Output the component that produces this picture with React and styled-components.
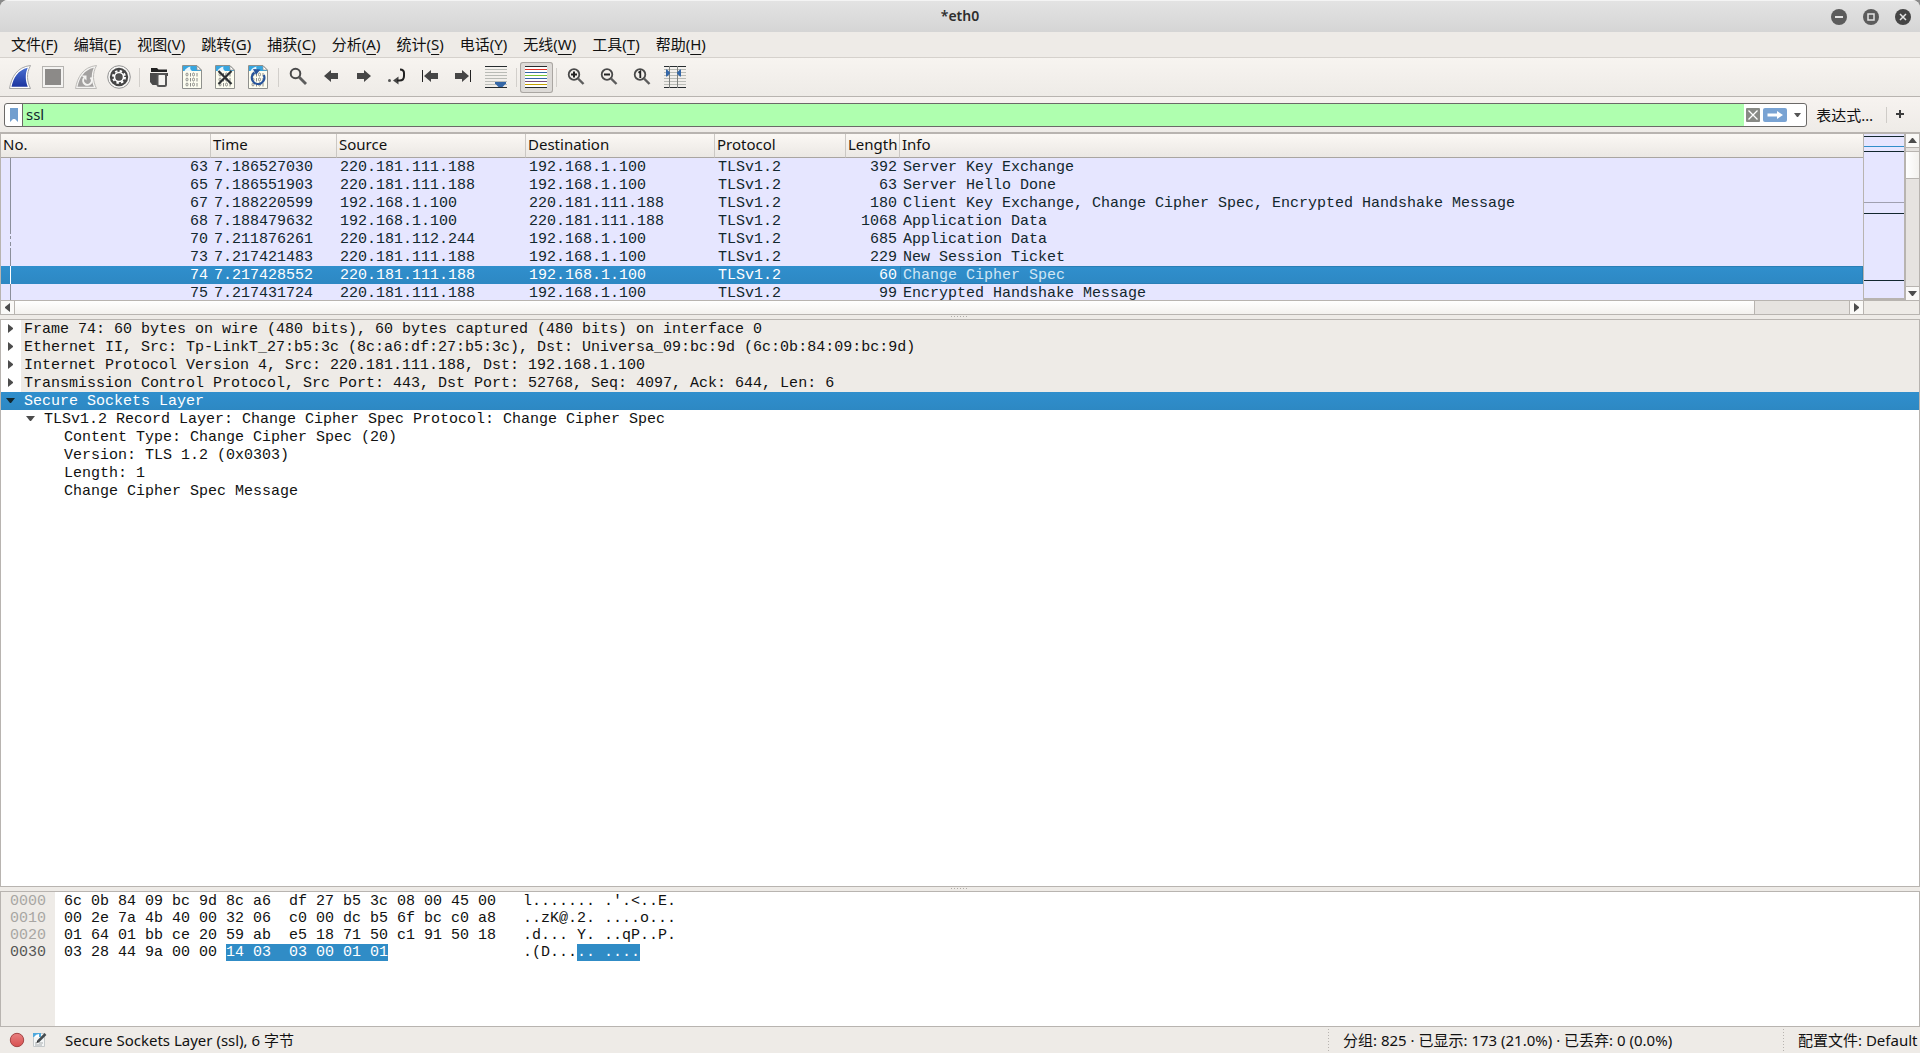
import React, { useState } from "react";
import styled, { createGlobalStyle, css } from "styled-components";

const UI_FONT = `"Noto Sans", "Noto Sans CJK SC", sans-serif`;
const MONO_FONT = `"Liberation Mono", "Noto Sans CJK SC", monospace`;

const MENUS = [
  ["文件", "F"],
  ["编辑", "E"],
  ["视图", "V"],
  ["跳转", "G"],
  ["捕获", "C"],
  ["分析", "A"],
  ["统计", "S"],
  ["电话", "Y"],
  ["无线", "W"],
  ["工具", "T"],
  ["帮助", "H"],
];

const COLUMNS = [
  { name: "No.", width: 210 },
  { name: "Time", width: 126 },
  { name: "Source", width: 189 },
  { name: "Destination", width: 189 },
  { name: "Protocol", width: 131 },
  { name: "Length", width: 54 },
  { name: "Info" },
];

const PACKETS = [
  [63, "7.186527030", "220.181.111.188", "192.168.1.100", "TLSv1.2", 392, "Server Key Exchange"],
  [65, "7.186551903", "220.181.111.188", "192.168.1.100", "TLSv1.2", 63, "Server Hello Done"],
  [67, "7.188220599", "192.168.1.100", "220.181.111.188", "TLSv1.2", 180, "Client Key Exchange, Change Cipher Spec, Encrypted Handshake Message"],
  [68, "7.188479632", "192.168.1.100", "220.181.111.188", "TLSv1.2", 1068, "Application Data"],
  [70, "7.211876261", "220.181.112.244", "192.168.1.100", "TLSv1.2", 685, "Application Data"],
  [73, "7.217421483", "220.181.111.188", "192.168.1.100", "TLSv1.2", 229, "New Session Ticket"],
  [74, "7.217428552", "220.181.111.188", "192.168.1.100", "TLSv1.2", 60, "Change Cipher Spec"],
  [75, "7.217431724", "220.181.111.188", "192.168.1.100", "TLSv1.2", 99, "Encrypted Handshake Message"],
];

const DETAILS = [
  { level: 0, arrow: "right", shaded: true, text: "Frame 74: 60 bytes on wire (480 bits), 60 bytes captured (480 bits) on interface 0" },
  { level: 0, arrow: "right", shaded: true, text: "Ethernet II, Src: Tp-LinkT_27:b5:3c (8c:a6:df:27:b5:3c), Dst: Universa_09:bc:9d (6c:0b:84:09:bc:9d)" },
  { level: 0, arrow: "right", shaded: true, text: "Internet Protocol Version 4, Src: 220.181.111.188, Dst: 192.168.1.100" },
  { level: 0, arrow: "right", shaded: true, text: "Transmission Control Protocol, Src Port: 443, Dst Port: 52768, Seq: 4097, Ack: 644, Len: 6" },
  { level: 0, arrow: "down", selected: true, text: "Secure Sockets Layer" },
  { level: 1, arrow: "down", text: "TLSv1.2 Record Layer: Change Cipher Spec Protocol: Change Cipher Spec" },
  { level: 2, text: "Content Type: Change Cipher Spec (20)" },
  { level: 2, text: "Version: TLS 1.2 (0x0303)" },
  { level: 2, text: "Length: 1" },
  { level: 2, text: "Change Cipher Spec Message" },
];

const HEX = [
  { offset: "0000", bytes: "6c 0b 84 09 bc 9d 8c a6  df 27 b5 3c 08 00 45 00", ascii: "l....... .'.<..E." },
  { offset: "0010", bytes: "00 2e 7a 4b 40 00 32 06  c0 00 dc b5 6f bc c0 a8", ascii: "..zK@.2. ....o..." },
  { offset: "0020", bytes: "01 64 01 bb ce 20 59 ab  e5 18 71 50 c1 91 50 18", ascii: ".d... Y. ..qP..P." },
  {
    offset: "0030",
    bytes: "03 28 44 9a 00 00 ",
    markedBytes: "14 03  03 00 01 01",
    ascii: ".(D...",
    markedAscii: ".. ....",
    active: true,
  },
];

const MARKS = [
  [2, "#12272e"],
  [12, "#308fcb"],
  [17, "#12272e"],
  [68, "#a0a0b0"],
  [79, "#12272e"],
  [146, "#12272e"],
];

const GRAY_LINES = [4, 7, 10, 13, 16, 19];

const Icon = ({ size = 25, children }) => (
  <svg width={size} height={size} viewBox={`0 0 ${size} ${size}`} fill="none" aria-hidden="true">
    {children}
  </svg>
);

const FIN = "M1.5 23.5C3.5 12 9 2 22.5 .5C18 9 19 16 22.5 23.5Z";
const FIN_INNER = "M3.5 21.8C5.5 12.5 10 5 19.8 2.7C16.8 9 17.5 16 19.8 21.8Z";

const FinIcon = () => (
  <Icon>
    <defs>
      <linearGradient id="fin" x1="0" y1="0" x2="0" y2="1">
        <stop offset="0" stopColor="#4a6fd0" />
        <stop offset="1" stopColor="#1c35a0" />
      </linearGradient>
    </defs>
    <path d={FIN} fill="#fff" stroke="#a5a5a5" />
    <path d={FIN_INNER} fill="url(#fin)" />
  </Icon>
);

const StopIcon = () => (
  <Icon>
    <rect x="1.5" y="1.5" width="21" height="21" fill="#f4f3f1" stroke="#b5b3b0" />
    <rect x="4" y="4" width="16" height="16" fill="#8c8a88" />
  </Icon>
);

const RestartIcon = () => (
  <Icon>
    <path d={FIN} fill="#f4f3f1" stroke="#bdbbb8" />
    <path d={FIN_INNER} fill="#a3a1a0" />
    <path d="M16.5 12.5a4.3 4.3 0 1 1-6.5.5" stroke="#f4f3f1" strokeWidth="2" />
    <path d="M7.5 10.5h5v5z" fill="#f4f3f1" />
  </Icon>
);

const OptionsIcon = () => (
  <Icon>
    <circle cx="12" cy="12" r="11.3" fill="#f8f7f5" stroke="#929292" />
    <circle cx="12" cy="12" r="9.2" fill="#454545" />
    <circle cx="12" cy="12" r="6" stroke="#fff" strokeWidth="2" strokeDasharray="2.4 2.31" />
    <circle cx="12" cy="12" r="4.5" stroke="#fff" strokeWidth="1.6" />
    <circle cx="12" cy="12" r="3" fill="#505050" />
  </Icon>
);

const OpenIcon = () => (
  <Icon>
    <path d="M4 3h6l1.5 1.5H20V7H4z" fill="#222" />
    <path d="M3 8h18v3h-9v9H5.5L3 17z" fill="#4a4a4a" />
    <rect x="10.5" y="9" width="8.5" height="12" rx="1.5" fill="#f5f3f0" stroke="#555" strokeWidth="2" />
  </Icon>
);

const DocIcon = ({ children }) => (
  <Icon>
    <path d="M2.5.5H17l4.500 4.500v18.500h-19z" fill="#fdfdf0" stroke="#8f908d" />
    <path d="M3 1h13.500L21 5.500v.5H3z" fill="#37a6e0" />
    <path d="M4.500 6q1-3 6-4.500-1 2.500 1.500 4.500z" fill="#e8f5fc" />
    <path d="M17 1v4h4z" fill="#fff" stroke="#8f908d" strokeWidth=".7" />
    <g stroke="#8b8c88">
      {[8, 13, 18].map((y) => (
        <React.Fragment key={y}>
          <ellipse cx="7" cy={y + 1.5} rx="1" ry="1.5" />
          <path d={`M10.5 ${y}v3.500`} />
          <ellipse cx="13.5" cy={y + 1.5} rx="1" ry="1.5" />
          <path d={`M17 ${y}v3.500`} />
        </React.Fragment>
      ))}
    </g>
    {children}
  </Icon>
);

const CloseDocIcon = () => (
  <DocIcon>
    <path d="M5.5 6l13 13M18.5 6l-13 13" stroke="#2c3033" strokeWidth="2.2" />
  </DocIcon>
);

const ReloadIcon = () => (
  <DocIcon>
    <path d="M8.5 7.500A6.3 6.3 0 1 0 17.8 10" stroke="#27549b" strokeWidth="2.2" />
    <path d="M7 4l7.500.5-4.500 5.500z" fill="#27549b" />
  </DocIcon>
);

const Lens = ({ children }) => (
  <Icon>
    <circle cx="10" cy="9.5" r="5.3" stroke="#4a4a4a" strokeWidth="1.8" />
    <path d="M14 13.5l5.5 5.5" stroke="#5d5d5d" strokeWidth="2.4" />
    {children}
  </Icon>
);

const FindIcon = () => (
  <Icon>
    <circle cx="9.5" cy="8.5" r="4.8" stroke="#4a4a4a" strokeWidth="2" />
    <path d="M13 12l7 7" stroke="#5d5d5d" strokeWidth="2.8" />
  </Icon>
);

const ZoomInIcon = () => (
  <Lens>
    <path d="M7 9.5h6M10 6.5v6" stroke="#222" strokeWidth="2" />
  </Lens>
);

const ZoomOutIcon = () => (
  <Lens>
    <path d="M7 9.5h6" stroke="#222" strokeWidth="2" />
  </Lens>
);

const ZoomResetIcon = () => (
  <Lens>
    <path d="M8.5 7.8l1.8-1.3v6.5" stroke="#222" strokeWidth="1.8" />
  </Lens>
);

const BackIcon = () => (
  <Icon>
    <path d="M5 11l7-6v3h7v6h-7v3z" fill="#464646" />
  </Icon>
);

const ForwardIcon = () => (
  <Icon>
    <path d="M19 11l-7-6v3H5v6h7v3z" fill="#464646" />
  </Icon>
);

const JumpIcon = () => (
  <Icon>
    <circle cx="4.5" cy="15.5" r="1.5" fill="#555" />
    <path d="M8 15.5l5.5-4v8z" fill="#464646" />
    <path d="M12 15.5h2.5q4.5 0 4.5-4.5V8q0-3.5-4-3.5" stroke="#222" strokeWidth="2" />
  </Icon>
);

const FirstIcon = () => (
  <Icon>
    <path d="M4.5 5v12" stroke="#222" />
    <path d="M6 11l7-6v3h7v6h-7v3z" fill="#464646" />
  </Icon>
);

const LastIcon = () => (
  <Icon>
    <path d="M19.5 5v12" stroke="#222" />
    <path d="M18 11l-7-6v3H4v6h7v3z" fill="#464646" />
  </Icon>
);

const LinesIcon = ({ colors = [], children }) => (
  <Icon>
    <path d="M1 1.5h22M1 22.5h22" stroke="#262b2e" />
    {GRAY_LINES.map((y, i) => (
      <path key={y} d={`M1 ${y + 0.5}h22`} stroke={colors[i] || "#b9bbb6"} />
    ))}
    {children}
  </Icon>
);

const AutoScrollIcon = () => (
  <LinesIcon>
    <path d="M11 17h11v1.5L18.5 22h-4L11 18.5z" fill="#3567a7" />
  </LinesIcon>
);

const ColorizeIcon = () => (
  <LinesIcon colors={["#e23026", "#3567a7", "#79c634", "#3567a7", "#76507b", "#c4a000"]}>
    <path d="M1 2h22v2H1zM1 5h22v2H1zM1 8h22v2H1zM1 11h22v2H1zM1 14h22v2H1zM1 17h22v2H1zM1 20h22v2H1z" fill="#fff" />
  </LinesIcon>
);

const ResizeIcon = () => (
  <LinesIcon>
    <path d="M6.5 1v22M14.5 1v22" stroke="#7f827f" />
    <path d="M3 4.5h1l3 3v1l-3 3H3zM18 4.5h-1l-3 3v1l3 3h1z" fill="#3567a7" />
  </LinesIcon>
);

const TOOLS = [
  ["开始", FinIcon],
  ["停止", StopIcon],
  ["重新开始", RestartIcon],
  ["选项", OptionsIcon],
  null,
  ["打开", OpenIcon],
  ["保存", DocIcon],
  ["关闭", CloseDocIcon],
  ["重新加载", ReloadIcon],
  null,
  ["查找", FindIcon],
  ["后退", BackIcon],
  ["前进", ForwardIcon],
  ["转到分组", JumpIcon],
  ["首个分组", FirstIcon],
  ["最新分组", LastIcon],
  ["自动滚动", AutoScrollIcon],
  null,
  ["着色", ColorizeIcon],
  null,
  ["放大", ZoomInIcon],
  ["缩小", ZoomOutIcon],
  ["普通大小", ZoomResetIcon],
  ["调整列宽", ResizeIcon],
];

const Arrow = ({ dir }) => (
  <svg width="9" height="9" viewBox="0 0 9 9" fill="currentColor" aria-hidden="true">
    {dir === "right" && <path d="M2 0l5 4v1L2 9z" />}
    {dir === "left" && <path d="M7 0L2 4v1l5 4z" />}
    {dir === "down" && <path d="M0 2h9L5 7H4z" />}
    {dir === "up" && <path d="M0 7h9L5 2H4z" />}
  </svg>
);

const App = () => {
  const [filter, setFilter] = useState("ssl");
  const [colorize, setColorize] = useState(true);
  const [selected, setSelected] = useState(74);

  return (
    <Window>
      <GlobalStyle />
      <TitleBar>
        <Title>*eth0</Title>
        <WindowButtons>
          <WindowButton aria-label="最小化">
            <Icon size={16}>
              <path d="M4 8h8" stroke="#e4e4e4" strokeWidth="2" />
            </Icon>
          </WindowButton>
          <WindowButton aria-label="最大化">
            <Icon size={16}>
              <path d="M5 5h6v6H5z" stroke="#e4e4e4" strokeWidth="1.5" />
            </Icon>
          </WindowButton>
          <WindowButton aria-label="关闭窗口" $dark>
            <Icon size={16}>
              <path d="M5 5l6 6M11 5l-6 6" stroke="#e4e4e4" strokeWidth="1.5" />
            </Icon>
          </WindowButton>
        </WindowButtons>
      </TitleBar>

      <MenuBar>
        {MENUS.map(([label, key]) => (
          <MenuItem key={key}>
            {label}(<u>{key}</u>)
          </MenuItem>
        ))}
      </MenuBar>

      <ToolBar>
        {TOOLS.map((tool, i) => {
          if (!tool) return <ToolSeparator key={i} />;
          const [label, ToolIcon] = tool;
          const isColorize = label === "着色";
          return (
            <ToolButton
              key={i}
              aria-label={label}
              $pressed={isColorize && colorize}
              onClick={isColorize ? () => setColorize(!colorize) : undefined}
            >
              <ToolIcon />
            </ToolButton>
          );
        })}
      </ToolBar>

      <FilterBar>
        <FilterField>
          <BookmarkButton aria-label="书签">
            <svg width="8" height="14" viewBox="0 0 8 14" aria-hidden="true">
              <path d="M0 0h8v14l-3-3H3l-3 3z" fill="#729fcf" />
            </svg>
          </BookmarkButton>
          <FilterInput
            aria-label="显示过滤器"
            value={filter}
            onChange={(e) => setFilter(e.target.value)}
          />
          <FieldButton aria-label="清除" onClick={() => setFilter("")}>
            <svg width="14" height="14" viewBox="0 0 14 14" aria-hidden="true">
              <rect width="14" height="14" rx="1" fill="#888a85" />
              <path d="M2.5 2.5l9 9M11.5 2.5l-9 9" stroke="#fff" strokeWidth="1.3" />
            </svg>
          </FieldButton>
          <FieldButton aria-label="应用">
            <svg width="24" height="14" viewBox="0 0 24 14" aria-hidden="true">
              <rect width="24" height="14" rx="2" fill="#79a3d3" />
              <path d="M4.500 5.500H14V3l6 4-6 4V8.500H4.500z" fill="#fff" />
            </svg>
          </FieldButton>
          <CaretButton aria-label="历史">
            <svg width="7" height="4" viewBox="0 0 7 4" aria-hidden="true">
              <path d="M0 0h7L4 4H3z" fill="#555" />
            </svg>
          </CaretButton>
        </FilterField>
        <TextButton>表达式…</TextButton>
        <FilterSeparator />
        <AddButton aria-label="添加">
          <svg width="8" height="8" viewBox="0 0 8 8" aria-hidden="true">
            <path d="M0 4h8M4 0v8" stroke="#3c3c3c" strokeWidth="2" />
          </svg>
        </AddButton>
      </FilterBar>

      <PacketPane>
        <PacketMain>
          <TableArea>
            <PacketTable>
              <colgroup>
                {COLUMNS.map((col) => (
                  <col key={col.name} width={col.width} />
                ))}
              </colgroup>
              <thead>
                <tr>
                  {COLUMNS.map((col) => (
                    <HeadCell key={col.name}>{col.name}</HeadCell>
                  ))}
                </tr>
              </thead>
              <tbody>
                {PACKETS.map(([no, time, src, dst, protocol, length, info]) => (
                  <PacketRow key={no} $selected={no === selected} onClick={() => setSelected(no)}>
                    <NumberCell $dashed={no === 70} $selected={no === selected}>
                      {no}
                    </NumberCell>
                    <Cell>{time}</Cell>
                    <Cell>{src}</Cell>
                    <Cell>{dst}</Cell>
                    <Cell>{protocol}</Cell>
                    <Cell $right>{length}</Cell>
                    <Cell $faded={no === selected}>{info}</Cell>
                  </PacketRow>
                ))}
              </tbody>
            </PacketTable>
          </TableArea>
          <MiniMap>
            {MARKS.map(([y, color]) => (
              <Mark key={y} style={{ top: y, background: color }} />
            ))}
          </MiniMap>
          <VScroll>
            <ScrollButton aria-label="向上">
              <Arrow dir="up" />
            </ScrollButton>
            <VTrack>
              <VThumb />
            </VTrack>
            <ScrollButton aria-label="向下">
              <Arrow dir="down" />
            </ScrollButton>
          </VScroll>
        </PacketMain>
        <HScroll>
          <ScrollButton aria-label="向左">
            <Arrow dir="left" />
          </ScrollButton>
          <HTrack>
            <HThumb />
          </HTrack>
          <ScrollButton aria-label="向右">
            <Arrow dir="right" />
          </ScrollButton>
        </HScroll>
      </PacketPane>

      <Splitter />

      <DetailPane>
        {DETAILS.map((row) => (
          <DetailRow key={row.text} $selected={row.selected}>
            <Branch $level={row.level}>{row.arrow && <Arrow dir={row.arrow} />}</Branch>
            <DetailText $shaded={row.shaded}>{row.text}</DetailText>
          </DetailRow>
        ))}
      </DetailPane>

      <Splitter />

      <HexPane>
        <Offsets>
          {HEX.map((line) => (
            <HexLine key={line.offset} $color={line.active ? "#555" : "#a8a6a3"}>
              {line.offset}
            </HexLine>
          ))}
        </Offsets>
        <Bytes>
          {HEX.map((line) => (
            <HexLine key={line.offset}>
              {line.bytes}
              {line.markedBytes && <Marked>{line.markedBytes}</Marked>}
            </HexLine>
          ))}
        </Bytes>
        <Ascii>
          {HEX.map((line) => (
            <HexLine key={line.offset}>
              {line.ascii}
              {line.markedAscii && <Marked>{line.markedAscii}</Marked>}
            </HexLine>
          ))}
        </Ascii>
      </HexPane>

      <StatusBar>
        <StatusIcons>
          <Icon size={16}>
            <defs>
              <linearGradient id="led" x1="0" y1="0" x2="0" y2="1">
                <stop offset="0" stopColor="#e88080" />
                <stop offset="1" stopColor="#d85050" />
              </linearGradient>
            </defs>
            <circle cx="8" cy="8" r="6.7" fill="url(#led)" stroke="#a34545" />
          </Icon>
          <Icon size={16}>
            <path d="M1.5 1.5h11v13h-11z" fill="#f4f6f6" stroke="#c5c9ca" />
            <path d="M1 1h8v4H1z" fill="#4fa8dc" />
            <path d="M2 5q2-3 5-3v3z" fill="#fff" />
            <path d="M3 11h2M7 11h4M3 13h7" stroke="#a8acae" />
            <path d="M13.5 2L6 9.5" stroke="#454b4e" strokeWidth="2.5" />
            <path d="M4.5 11l.8-2.500 1.700 1.700z" fill="#222" />
          </Icon>
        </StatusIcons>
        <StatusText>Secure Sockets Layer (ssl), 6 字节</StatusText>
        <StatusSection $width={455}>分组: 825 · 已显示: 173 (21.0%) · 已丢弃: 0 (0.0%)</StatusSection>
        <StatusSection $width={137}>配置文件: Default</StatusSection>
      </StatusBar>
    </Window>
  );
};

export default App;

const GlobalStyle = createGlobalStyle`
  * {
    box-sizing: border-box;
  }

  body {
    margin: 0;
    background: #8a8a8a;
    font-family: ${UI_FONT};
    font-size: 15px;
    color: #111;
  }

  button {
    display: flex;
    align-items: center;
    justify-content: center;
    padding: 0;
    border: 0;
    background: none;
    font: inherit;
    color: inherit;
  }

  svg {
    display: block;
    flex: none;
  }
`;

const selectedFill = css`
  background: linear-gradient(#308fcd, #2d88c3);
`;

const Window = styled.div`
  display: flex;
  flex-direction: column;
  min-height: 100vh;
  background: #eeebe7;
  border-radius: 8px 8px 0 0;
  overflow: hidden;
`;

const TitleBar = styled.header`
  display: grid;
  grid-template-columns: 1fr auto 1fr;
  align-items: center;
  height: 32px;
  border-top: 1px solid #f4f4f4;
  background: linear-gradient(#e3e3e3, #d5d5d5);
`;

const Title = styled.h1`
  grid-column: 2;
  margin: 0;
  padding-bottom: 2px;
  font-size: 14px;
  font-weight: 600;
  color: #2e2e2e;
`;

const WindowButtons = styled.div`
  display: flex;
  justify-content: flex-end;
  gap: 16px;
  padding-right: 9px;
`;

const WindowButton = styled.button`
  width: 16px;
  height: 16px;
  border-radius: 50%;
  background: ${({ $dark }) => ($dark ? "#454545" : "#5c5c5c")};
`;

const MenuBar = styled.nav`
  display: flex;
  height: 26px;
  padding-left: 3px;
  border-bottom: 1px solid #d5d1cc;
`;

const MenuItem = styled.button`
  padding: 0 8px;
  line-height: 25px;

  u {
    text-decoration-thickness: 1px;
    text-underline-offset: 4px;
  }
`;

const ToolBar = styled.div`
  display: flex;
  align-items: center;
  height: 39px;
  padding-left: 4px;
  border-bottom: 1px solid #b8b4b0;
  background: linear-gradient(#f7f4f0, #eeebe7);
`;

const ToolButton = styled.button`
  width: 33px;
  height: 31px;
  border-radius: 3px;
  ${({ $pressed }) =>
    $pressed &&
    css`
      background: #dddad7;
      box-shadow: inset 0 0 0 1px #aaa6a2;
    `}
`;

const ToolSeparator = styled.span`
  width: 1px;
  height: 19px;
  margin: 0 3px;
  background: #d2cfcb;
`;

const FilterBar = styled.div`
  display: flex;
  align-items: center;
  height: 35px;
  padding: 0 12px 0 4px;
  background: linear-gradient(#f7f3f0, #eeebe7);
`;

const FilterField = styled.div`
  display: flex;
  flex: 1;
  height: 24px;
  border: 1px solid #6b6967;
  border-radius: 3px;
  background: #fff;
  overflow: hidden;
`;

const BookmarkButton = styled.button`
  width: 18px;
  border-right: 1px solid #6b6967;
`;

const FilterInput = styled.input`
  flex: 1;
  min-width: 0;
  margin-right: 1px;
  padding: 0 3px 2px;
  border: 0;
  outline: 0;
  background: #afffaf;
  font: inherit;
  color: #12272e;
`;

const FieldButton = styled.button`
  padding: 0 2px 0 1px;
`;

const CaretButton = styled.button`
  width: 17px;
`;

const TextButton = styled.button`
  padding: 0 8px 0 9px;
`;

const FilterSeparator = styled.span`
  width: 1px;
  height: 16px;
  margin: 0 5px;
  background: #cfccc8;
`;

const AddButton = styled.button`
  width: 16px;
  height: 24px;
  padding-bottom: 2px;
`;

const PacketPane = styled.section`
  border: 1px solid #b8b4b0;
  border-top-width: 2px;
`;

const PacketMain = styled.div`
  display: flex;
  height: 167px;
  border-bottom: 1px solid #b8b4b0;
`;

const TableArea = styled.div`
  flex: 1;
  min-width: 0;
  background: #e6e6ff;
  overflow: hidden;
`;

const PacketTable = styled.table`
  width: 100%;
  table-layout: fixed;
  border-collapse: separate;
  border-spacing: 0;
`;

const HeadCell = styled.th`
  height: 24px;
  padding: 0 2px 2px;
  border-right: 1px solid #cbc8c4;
  border-bottom: 1px solid #a9a5a1;
  background: linear-gradient(#fbf8f4, #ebe8e4);
  text-align: left;
  font-weight: 400;
  line-height: 21px;
  white-space: nowrap;

  &:last-child {
    border-right: 0;
  }
`;

const PacketRow = styled.tr`
  color: ${({ $selected }) => ($selected ? "#fff" : "#12272e")};
  ${({ $selected }) => $selected && selectedFill}
`;

const Cell = styled.td`
  height: 18px;
  padding: 1px 3px 0;
  font: 15px/17px ${MONO_FONT};
  text-align: ${({ $right }) => ($right ? "right" : "left")};
  white-space: pre;
  ${({ $faded }) =>
    $faded &&
    css`
      box-shadow: inset 0 0 0 1px #2a7fb6;
      color: #cfe6f5;
    `}
`;

const NumberCell = styled(Cell)`
  text-align: right;
  background: ${({ $dashed, $selected }) =>
      $dashed
        ? "linear-gradient(#8b8f9b 4px, transparent 4px 6px, #8b8f9b 6px 9px, transparent 9px 12px, #8b8f9b 12px 16px, transparent 16px)"
        : $selected
          ? "linear-gradient(#fff, #fff)"
          : "linear-gradient(#8b8f9b, #8b8f9b)"}
    9px 0 / 1px 100% no-repeat;
`;

const MiniMap = styled.div`
  position: relative;
  width: 43px;
  border: solid #b8b4b0;
  border-width: 0 2px 2px 1px;
  background: #e6e6ff;
`;

const Mark = styled.span`
  position: absolute;
  left: 0;
  width: 100%;
  height: 1px;
`;

const VScroll = styled.div`
  display: flex;
  flex-direction: column;
  width: 13px;
`;

const ScrollButton = styled.button`
  flex: none;
  width: 13px;
  height: 13px;
  background: #faf9f7;
  color: #4c4c4c;
`;

const VTrack = styled.div`
  flex: 1;
  padding-top: 3px;
  border: solid #b8b4b0;
  border-width: 1px 0;
  background: #e6e3e0;
`;

const VThumb = styled.div`
  height: 28px;
  border: solid #b8b4b0;
  border-width: 1px 0;
  background: linear-gradient(90deg, #fff, #f3f1ee);
`;

const HScroll = styled.div`
  display: flex;
  width: calc(100% - 55px);
  height: 13px;
  border-right: 1px solid #b8b4b0;
`;

const HTrack = styled.div`
  flex: 1;
  padding-right: 94px;
  border: solid #b8b4b0;
  border-width: 0 1px;
  background: #e6e3e0;
`;

const HThumb = styled.div`
  height: 100%;
  border-right: 1px solid #b8b4b0;
  background: linear-gradient(#fff, #f3f1ee);
`;

const Splitter = styled.div`
  height: 4px;
  padding: 1px calc(50% - 9px) 2px;
  background: repeating-linear-gradient(90deg, #b0aca8 0 1px, transparent 1px 3px) content-box;
`;

const DetailPane = styled.section`
  flex: 1;
  border: 1px solid #b8b4b0;
  background: #fff;
`;

const DetailRow = styled.div`
  display: flex;
  height: 18px;
  font: 15px/17px ${MONO_FONT};
  white-space: pre;
  color: ${({ $selected }) => ($selected ? "#fff" : "#111")};
  ${({ $selected }) => $selected && selectedFill}

  svg {
    color: ${({ $selected }) => ($selected ? "#12272e" : "#4c4c4c")};
  }
`;

const Branch = styled.span`
  display: flex;
  align-items: center;
  justify-content: flex-end;
  width: ${({ $level }) => 20 + $level * 20}px;
  padding: 0 6px 1px 0;
`;

const DetailText = styled.span`
  flex: 1;
  padding: 1px 0 0 3px;
  background: ${({ $shaded }) => ($shaded ? "#eeebe7" : "none")};
`;

const HexPane = styled.section`
  display: flex;
  height: 136px;
  border: 1px solid #b8b4b0;
  background: #fff;
`;

const Offsets = styled.div`
  padding: 1px 9px 0;
  background: #eeebe7;
`;

const Bytes = styled.div`
  padding: 1px 27px 0 9px;
`;

const Ascii = styled.div`
  padding-top: 1px;
`;

const HexLine = styled.div`
  font: 15px/17px ${MONO_FONT};
  white-space: pre;
  color: ${({ $color }) => $color || "#111"};
`;

const Marked = styled.mark`
  display: inline-block;
  height: 17px;
  background: #308cc6;
  color: #fff;
`;

const StatusBar = styled.footer`
  display: flex;
  align-items: center;
  height: 26px;
`;

const StatusIcons = styled.div`
  display: flex;
  gap: 7px;
  width: 65px;
  padding-left: 9px;
`;

const StatusText = styled.span`
  flex: 1;
  padding-bottom: 2px;
`;

const StatusSection = styled.span`
  width: ${({ $width }) => $width}px;
  padding: 0 0 2px 15px;
  background: repeating-linear-gradient(#b8b4b0 0 1px, transparent 1px 3px) 0 0 / 1px 100% no-repeat;
  white-space: nowrap;
`;
